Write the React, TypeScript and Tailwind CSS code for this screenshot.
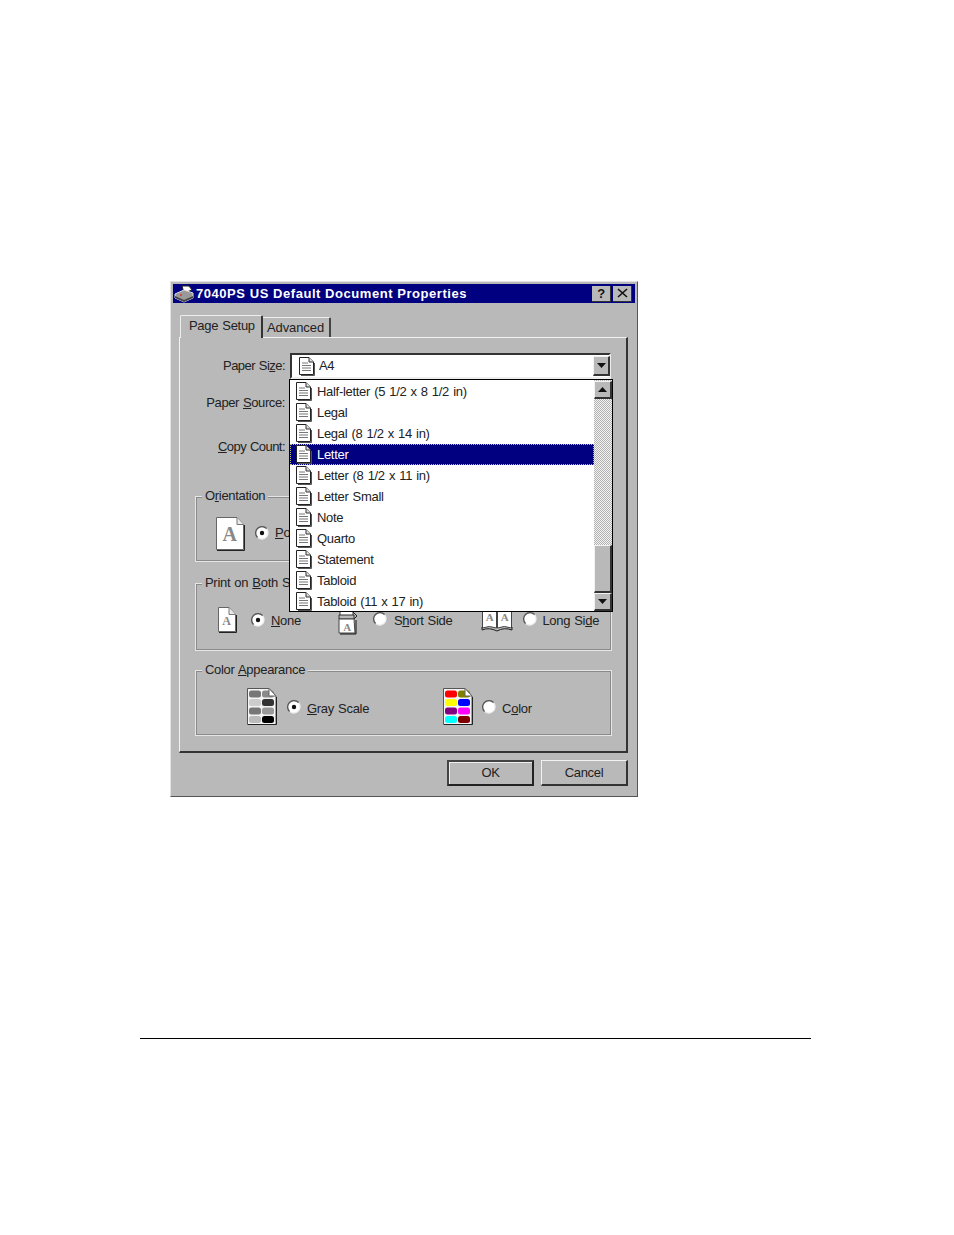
import React from "react";

function Doc({ className = "" }: { className?: string }) {
  return (
    <svg width="17" height="19" viewBox="0 0 17 19" className={className}>
      <path d="M1.500 .5H11L15.500 5V17.500H1.500Z" fill="#fff" stroke="#222" />
      <path d="M16.500 6V18.500H3" fill="none" stroke="#555" />
      <path d="M11 .5V5H15.500" fill="#ddd" stroke="#333" />
      <path d="M4 6H10M4 8.500H13M4 11H13M4 13.500H13" stroke="#777" strokeWidth="1" />
    </svg>
  );
}

function LetterDoc({ w, h, size }: { w: number; h: number; size: number }) {
  return (
    <svg width={w} height={h} viewBox={`0 0 ${w} ${h}`} className="shrink-0">
      <path d={`M.5 .5H${w - 8}L${w - 1.5} 7.500V${h - 1.5}H.5Z`} fill="#fff" stroke="#666" />
      <path d={`M${w - 8} .5V7.500H${w - 1.5}`} fill="#e8e8e8" stroke="#777" />
      <path d={`M${w - .5} 8V${h - .5}H1`} fill="none" stroke="#222" />
      <text x={w / 2 - 1} y={h * 0.7} textAnchor="middle" fontFamily="'Liberation Serif', serif" fontWeight="700" fontSize={size} fill="#888">A</text>
    </svg>
  );
}

function Flip() {
  return (
    <svg width="22" height="27" viewBox="0 0 22 27" className="shrink-0">
      <path d="M3 1H16V8H3Z" fill="#fff" stroke="#333" />
      <path d="M2 7H17V11H2Z" fill="#b9b9b9" stroke="#333" />
      <path d="M16 4L20 8L16 12" fill="none" stroke="#222" />
      <path d="M2 11H17L18 25H2Z" fill="#fff" stroke="#444" />
      <path d="M19 12V26H3" fill="none" stroke="#111" />
      <text x="10" y="23" textAnchor="middle" fontFamily="'Liberation Serif', serif" fontWeight="700" fontSize="11" fill="#888">A</text>
    </svg>
  );
}

function Book() {
  return (
    <svg width="32" height="23" viewBox="0 0 32 23" className="shrink-0">
      <path d="M1.500 1H15.500V19Q8 16 1.500 19Z" fill="#fff" stroke="#444" />
      <path d="M16.500 1H30.500V19Q23 16 16.500 19Z" fill="#fff" stroke="#444" />
      <path d="M1 18V21Q8 18 16 22Q23 18 31 21V18" fill="none" stroke="#222" />
      <text x="8.500" y="12" textAnchor="middle" fontFamily="'Liberation Serif', serif" fontWeight="700" fontSize="11" fill="#888">A</text>
      <text x="23.500" y="12" textAnchor="middle" fontFamily="'Liberation Serif', serif" fontWeight="700" fontSize="11" fill="#888">A</text>
    </svg>
  );
}

function Swatches({ colors }: { colors: string[] }) {
  return (
    <svg width="30" height="37" viewBox="0 0 30 37" className="shrink-0">
      <path d="M.5 .5H22L29 8V36.500H.5Z" fill="#f4f4f4" stroke="#555" />
      <path d="M29.500 9V36.500H1" fill="none" stroke="#222" />
      {colors.map((c, i) => (
        <rect key={i} x={i % 2 === 0 ? 2 : 15} y={2.5 + Math.floor(i / 2) * 8.5} width="12" height="7" rx="2.5" fill={c} />
      ))}
      <path d="M22 .5V8H29Z" fill="#fff" stroke="#666" />
    </svg>
  );
}

function Radio({ on = false }: { on?: boolean }) {
  return (
    <svg width="14" height="14" viewBox="0 0 14 14" className="shrink-0">
      <circle cx="7" cy="7" r="6" fill="#fff" />
      <path d="M2.500 11.500A6.300 6.300 0 0 1 11.500 2.500" fill="none" stroke="#555" strokeWidth="1.300" />
      <path d="M3 11.800A6.300 6.300 0 0 0 11.800 3" fill="none" stroke="#eee" strokeWidth="1.300" />
      {on && <circle cx="7" cy="7" r="2.200" fill="#111" />}
    </svg>
  );
}

function Arrow({ up = false }: { up?: boolean }) {
  return (
    <svg width="9" height="5" viewBox="0 0 9 5">
      <path d={up ? "M4.500 0L9 5H0Z" : "M0 0H9L4.500 5Z"} fill="#111" />
    </svg>
  );
}

function ScrollBtn({ up = false, className = "" }: { up?: boolean; className?: string }) {
  return (
    <div className={`flex items-center justify-center bg-[#b9b9b9] border-t border-l border-t-[#f2f2f2] border-l-[#f2f2f2] border-r-2 border-b-2 border-r-[#333] border-b-[#333] ${className}`}>
      <Arrow up={up} />
    </div>
  );
}

function Group({ title, className, children }: { title: React.ReactNode; className: string; children: React.ReactNode }) {
  return (
    <div className={`relative ml-[15px] w-[417px] border border-[#e6e6e6] outline outline-1 -outline-offset-2 outline-[#8a8a8a] flex items-center ${className}`}>
      <div className="absolute left-[6px] top-[-9px] h-[16px] px-[3px] bg-[#b9b9b9] leading-[16px] whitespace-nowrap">{title}</div>
      {children}
    </div>
  );
}

const items = [
  "Half-letter (5 1/2 x 8 1/2 in)",
  "Legal",
  "Legal (8 1/2 x 14 in)",
  "Letter",
  "Letter (8 1/2 x 11 in)",
  "Letter Small",
  "Note",
  "Quarto",
  "Statement",
  "Tabloid",
  "Tabloid (11 x 17 in)",
];

const gray = ["#777", "#8a8a8a", "#ccc", "#333", "#777", "#999", "#bbb", "#000"];
const color = ["#ff0000", "#808000", "#ffff00", "#0000ff", "#800080", "#ff00ff", "#00ffff", "#800000"];

export default function App() {
  return (
    <div className="w-[954px] h-[1235px] bg-white overflow-hidden pt-[281px] font-['Liberation_Sans',sans-serif] text-[13px] tracking-[-0.3px] [word-spacing:0.8px] text-[#222]">
      <div className="ml-[170px] w-[468px] h-[516px] bg-[#b9b9b9] border border-t-[#e4e4e4] border-l-[#e4e4e4] border-r-[#555] border-b-[#555] p-[2px] flex flex-col">
        {/* title bar */}
        <div className="h-[19px] shrink-0 bg-[#000080] flex items-center pl-[1px] pr-[3px] text-white">
          <svg width="20" height="18" viewBox="0 0 20 18" className="shrink-0">
            <path d="M8 1L15 1L18 5L10 8Z" fill="#fff" stroke="#222" />
            <path d="M1 9L10 5L19 8V13L10 17L1 13Z" fill="#999" stroke="#ddd" />
            <path d="M1 11L10 15L19 11V13L10 17L1 13Z" fill="#444" />
            <circle cx="7" cy="10" r="1" fill="#d33" />
          </svg>
          <span className="ml-[2px] font-bold text-[13px] tracking-[0.55px] [word-spacing:0px] whitespace-nowrap">7040PS US Default Document Properties</span>
          <div className="ml-auto flex">
            <div className="w-[19px] h-[16px] mr-[2px] flex items-center justify-center bg-[#b9b9b9] border-r border-b border-[#333] text-[#111] font-bold text-[13px] leading-none">?</div>
            <div className="w-[19px] h-[16px] flex items-center justify-center bg-[#b9b9b9] border-r border-b border-[#333]">
              <svg width="11" height="10" viewBox="0 0 11 10"><path d="M1 1L10 9M10 1L1 9" stroke="#111" strokeWidth="1.600" /></svg>
            </div>
          </div>
        </div>

        {/* tabs */}
        <div className="h-[34px] shrink-0 flex items-end pl-[7px]">
          <div className="relative z-10 h-[23px] w-[83px] mb-[-1px] bg-[#b9b9b9] border-t border-l border-[#eee] border-r-2 border-r-[#333] rounded-t-[2px] pl-[8px] pt-[1px] leading-[18px] whitespace-nowrap">Page Setup</div>
          <div className="h-[20px] w-[69px] ml-[-1px] border-t border-r-2 border-[#eee] border-r-[#444] rounded-t-[2px] pl-[5px] leading-[19px] tracking-[-0.1px]">Advanced</div>
        </div>

        {/* panel */}
        <div className="relative ml-[6px] w-[449px] h-[416px] shrink-0 border-t border-l border-[#f2f2f2] border-r-2 border-b-2 border-r-[#333] border-b-[#333] pt-[15px]">
          <div className="flex h-[26px]">
            <div className="w-[105px] text-right leading-[25px] tracking-[-0.55px]">Paper Si<u>z</u>e:</div>
            <div className="ml-[5px] w-[321px] border-2 border-t-[#333] border-l-[#333] border-b-[#eee] border-r-[#eee] bg-white flex items-center justify-between">
              <div className="flex items-center pl-[6px]">
                <Doc />
                <span className="ml-[4px]">A4</span>
              </div>
              <ScrollBtn className="w-[17px] h-[20px] mr-[-1px]" />
            </div>
          </div>

          <div className="w-[105px] text-right mt-[16px] h-[16px] leading-[16px] tracking-[-0.4px]">Paper <u>S</u>ource:</div>
          <div className="w-[105px] text-right mt-[28px] h-[16px] leading-[16px] tracking-[-0.55px]"><u>C</u>opy Count:</div>

          <Group className="mt-[41px] h-[66px]" title={<>O<u>r</u>ientation</>}>
            <div className="ml-[20px] mt-[9px]"><LetterDoc w={29} h={34} size={20} /></div>
            <div className="ml-[10px] mt-[7px]"><Radio on /></div>
            <span className="ml-[6px] mt-[7px]"><u>P</u>ortrait</span>
          </Group>

          <Group className="mt-[21px] h-[68px]" title={<>Print on <u>B</u>oth Sides</>}>
            <div className="ml-[22px] mt-[6px]"><LetterDoc w={19} h={26} size={12} /></div>
            <div className="ml-[14px] mt-[6px]"><Radio on /></div>
            <span className="ml-[6px] mt-[8px] whitespace-nowrap"><u>N</u>one</span>
            <div className="ml-[36px] mt-[8px]"><Flip /></div>
            <div className="ml-[14px] mt-[4px]"><Radio /></div>
            <span className="ml-[7px] mt-[8px] whitespace-nowrap">S<u>h</u>ort Side</span>
            <div className="ml-[29px] mt-[6px]"><Book /></div>
            <div className="ml-[10px] mt-[4px]"><Radio /></div>
            <span className="ml-[5px] mt-[8px] whitespace-nowrap">Long Si<u>d</u>e</span>
          </Group>

          <Group className="mt-[19px] h-[66px]" title={<>Color <u>A</u>ppearance</>}>
            <div className="ml-[51px] mt-[7px]"><Swatches colors={gray} /></div>
            <div className="ml-[10px] mt-[8px]"><Radio on /></div>
            <span className="ml-[6px] mt-[11px] whitespace-nowrap"><u>G</u>ray Scale</span>
            <div className="ml-[74px] mt-[7px]"><Swatches colors={color} /></div>
            <div className="ml-[9px] mt-[8px]"><Radio /></div>
            <span className="ml-[6px] mt-[11px] whitespace-nowrap">C<u>o</u>lor</span>
          </Group>

          {/* open dropdown */}
          <div className="absolute left-[109px] top-[41px] w-[324px] h-[233px] bg-white border border-black flex">
            <div className="flex-1 flex flex-col pt-px">
              {items.map((t) => (
                <div
                  key={t}
                  className={`h-[21px] shrink-0 flex items-center pl-[5px] ${t === "Letter" ? "bg-[#000080] text-white outline-1 -outline-offset-1 outline-dotted outline-[#c8c860]" : ""}`}
                >
                  <Doc />
                  <span className="ml-[5px] whitespace-nowrap">{t}</span>
                </div>
              ))}
            </div>
            <div className="w-[18px] flex flex-col pt-px bg-[repeating-conic-gradient(#f4f4f4_0_25%,#b0b0b0_0_50%)] bg-[length:2px_2px]">
              <ScrollBtn up className="h-[18px]" />
              <div className="flex-1" />
              <div className="h-[48px] bg-[#b9b9b9] border-t border-l border-t-[#f2f2f2] border-l-[#f2f2f2] border-r-2 border-b-2 border-r-[#333] border-b-[#333]" />
              <ScrollBtn className="h-[18px]" />
            </div>
          </div>
        </div>

        {/* buttons */}
        <div className="flex justify-end gap-[7px] mt-[7px] mr-[7px]">
          <div className="w-[87px] h-[26px] flex items-center justify-center border-2 border-[#222] border-t-[#444] border-l-[#444] shadow-[inset_1px_1px_0_#eee]">OK</div>
          <div className="w-[87px] h-[26px] flex items-center justify-center border-t border-l border-[#f2f2f2] border-r-2 border-b-2 border-r-[#333] border-b-[#333]">Cancel</div>
        </div>
      </div>

      <div className="ml-[140px] mt-[241px] w-[671px] h-px bg-black" />
    </div>
  );
}
